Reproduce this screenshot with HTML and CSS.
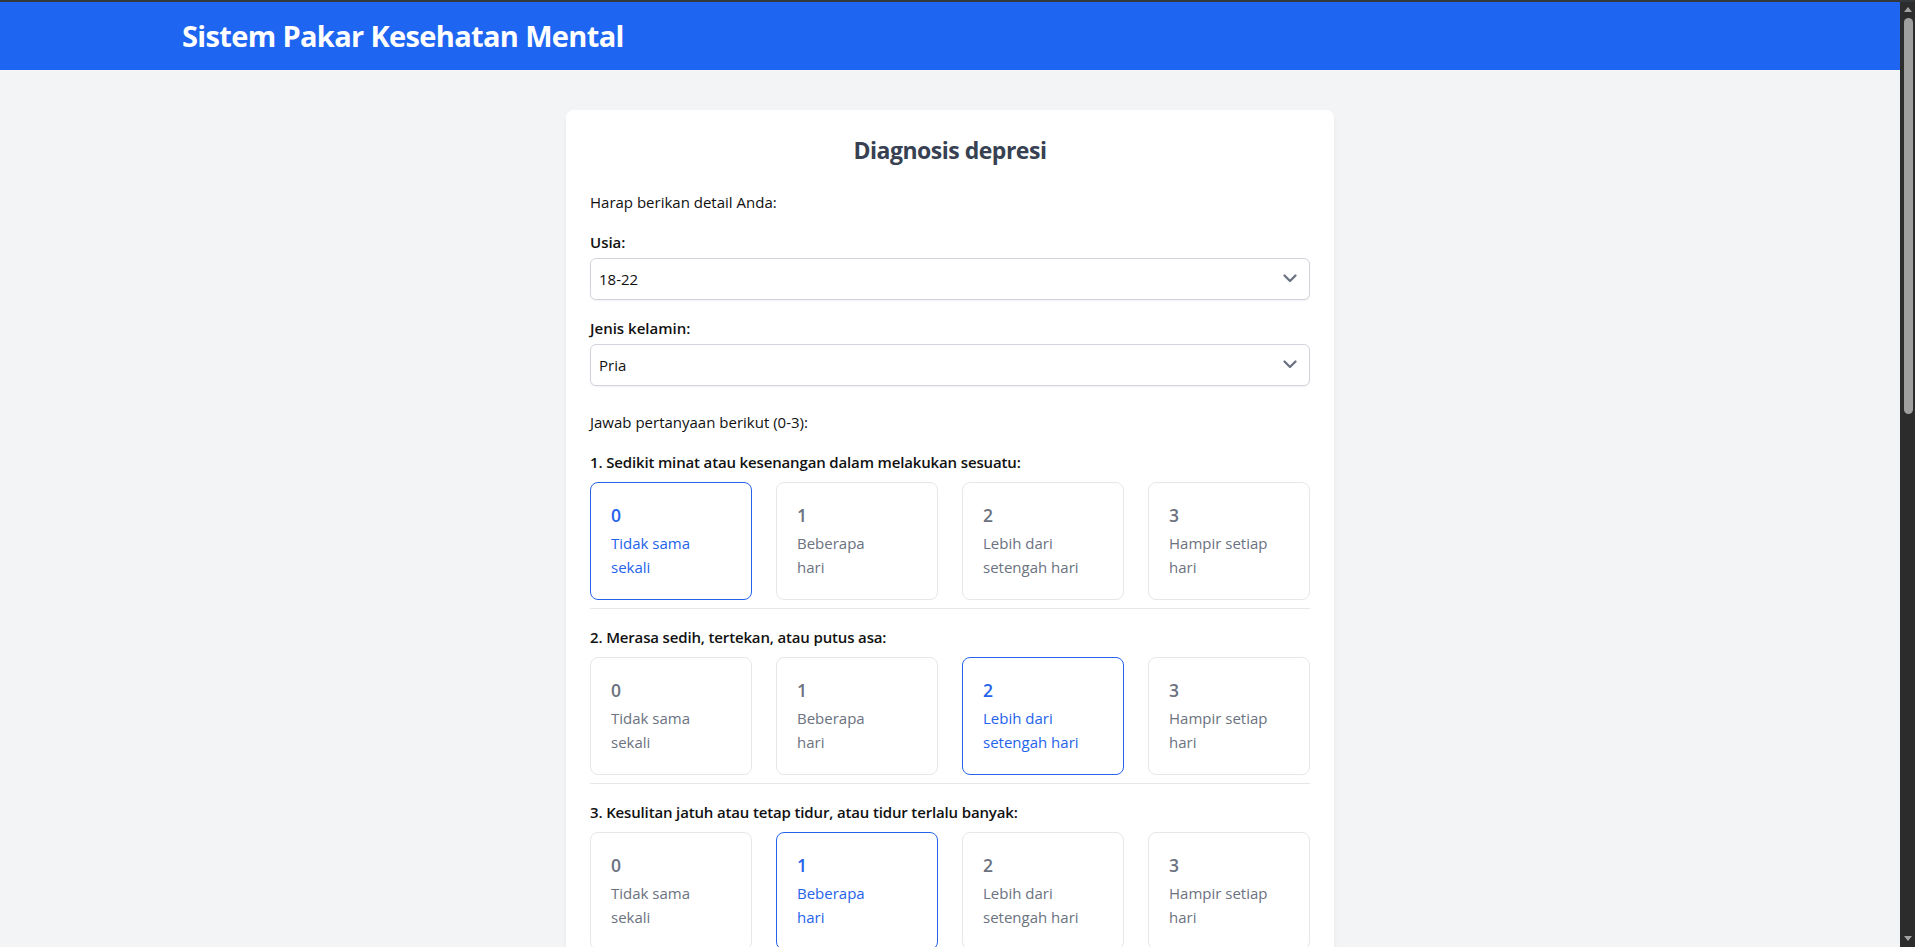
FILE: index.html
```html
<!DOCTYPE html>
<html lang="id">
<head>
<meta charset="utf-8">
<title>Sistem Pakar Kesehatan Mental</title>
<link rel="stylesheet" href="styles.css">
</head>
<body>
<div class="topline"></div>
<div class="frame">
  <div class="viewport">
    <header class="nav">
      <div class="container">
        <h1 class="brand">Sistem Pakar Kesehatan Mental</h1>
      </div>
    </header>
    <main class="page">
      <section class="card">
        <h2 class="card-title">Diagnosis depresi</h2>
        <p class="intro">Harap berikan detail Anda:</p>

        <div class="field">
          <label class="field-label" for="usia">Usia:</label>
          <div class="select-wrap">
            <select id="usia" class="select">
              <option selected>18-22</option>
              <option>23-27</option>
              <option>28-32</option>
              <option>33-37</option>
            </select>
            <svg class="chev" viewBox="0 0 24 24" aria-hidden="true"><path d="M6.5 9.5l5.5 5.5 5.5-5.5" fill="none" stroke="#6b7280" stroke-width="2.3" stroke-linecap="round" stroke-linejoin="round"/></svg>
          </div>
        </div>

        <div class="field field-last">
          <label class="field-label" for="jk">Jenis kelamin:</label>
          <div class="select-wrap">
            <select id="jk" class="select">
              <option selected>Pria</option>
              <option>Wanita</option>
            </select>
            <svg class="chev" viewBox="0 0 24 24" aria-hidden="true"><path d="M6.5 9.5l5.5 5.5 5.5-5.5" fill="none" stroke="#6b7280" stroke-width="2.3" stroke-linecap="round" stroke-linejoin="round"/></svg>
          </div>
        </div>

        <p class="intro">Jawab pertanyaan berikut (0-3):</p>

        <div class="question">
          <p class="q-label">1. Sedikit minat atau kesenangan dalam melakukan sesuatu:</p>
          <div class="options">
            <label class="option is-selected"><input class="radio" type="radio" name="q1" checked><span class="opt-num">0</span><span class="opt-text">Tidak sama<br>sekali</span></label>
            <label class="option"><input class="radio" type="radio" name="q1"><span class="opt-num">1</span><span class="opt-text">Beberapa<br>hari</span></label>
            <label class="option"><input class="radio" type="radio" name="q1"><span class="opt-num">2</span><span class="opt-text">Lebih dari<br>setengah hari</span></label>
            <label class="option"><input class="radio" type="radio" name="q1"><span class="opt-num">3</span><span class="opt-text">Hampir setiap<br>hari</span></label>
          </div>
        </div>

        <div class="question">
          <p class="q-label">2. Merasa sedih, tertekan, atau putus asa:</p>
          <div class="options">
            <label class="option"><input class="radio" type="radio" name="q2"><span class="opt-num">0</span><span class="opt-text">Tidak sama<br>sekali</span></label>
            <label class="option"><input class="radio" type="radio" name="q2"><span class="opt-num">1</span><span class="opt-text">Beberapa<br>hari</span></label>
            <label class="option is-selected"><input class="radio" type="radio" name="q2" checked><span class="opt-num">2</span><span class="opt-text">Lebih dari<br>setengah hari</span></label>
            <label class="option"><input class="radio" type="radio" name="q2"><span class="opt-num">3</span><span class="opt-text">Hampir setiap<br>hari</span></label>
          </div>
        </div>

        <div class="question">
          <p class="q-label">3. Kesulitan jatuh atau tetap tidur, atau tidur terlalu banyak:</p>
          <div class="options">
            <label class="option"><input class="radio" type="radio" name="q3"><span class="opt-num">0</span><span class="opt-text">Tidak sama<br>sekali</span></label>
            <label class="option is-selected"><input class="radio" type="radio" name="q3" checked><span class="opt-num">1</span><span class="opt-text">Beberapa<br>hari</span></label>
            <label class="option"><input class="radio" type="radio" name="q3"><span class="opt-num">2</span><span class="opt-text">Lebih dari<br>setengah hari</span></label>
            <label class="option"><input class="radio" type="radio" name="q3"><span class="opt-num">3</span><span class="opt-text">Hampir setiap<br>hari</span></label>
          </div>
        </div>

        <div class="question">
          <p class="q-label">4. Merasa lelah atau kurang bertenaga:</p>
          <div class="options">
            <label class="option is-selected"><input class="radio" type="radio" name="q4" checked><span class="opt-num">0</span><span class="opt-text">Tidak sama<br>sekali</span></label>
            <label class="option"><input class="radio" type="radio" name="q4"><span class="opt-num">1</span><span class="opt-text">Beberapa<br>hari</span></label>
            <label class="option"><input class="radio" type="radio" name="q4"><span class="opt-num">2</span><span class="opt-text">Lebih dari<br>setengah hari</span></label>
            <label class="option"><input class="radio" type="radio" name="q4"><span class="opt-num">3</span><span class="opt-text">Hampir setiap<br>hari</span></label>
          </div>
        </div>

        <div class="question">
          <p class="q-label">5. Nafsu makan buruk atau makan berlebihan:</p>
          <div class="options">
            <label class="option is-selected"><input class="radio" type="radio" name="q5" checked><span class="opt-num">0</span><span class="opt-text">Tidak sama<br>sekali</span></label>
            <label class="option"><input class="radio" type="radio" name="q5"><span class="opt-num">1</span><span class="opt-text">Beberapa<br>hari</span></label>
            <label class="option"><input class="radio" type="radio" name="q5"><span class="opt-num">2</span><span class="opt-text">Lebih dari<br>setengah hari</span></label>
            <label class="option"><input class="radio" type="radio" name="q5"><span class="opt-num">3</span><span class="opt-text">Hampir setiap<br>hari</span></label>
          </div>
        </div>

        <div class="question">
          <p class="q-label">6. Merasa buruk tentang diri sendiri, merasa gagal, atau mengecewakan keluarga:</p>
          <div class="options">
            <label class="option is-selected"><input class="radio" type="radio" name="q6" checked><span class="opt-num">0</span><span class="opt-text">Tidak sama<br>sekali</span></label>
            <label class="option"><input class="radio" type="radio" name="q6"><span class="opt-num">1</span><span class="opt-text">Beberapa<br>hari</span></label>
            <label class="option"><input class="radio" type="radio" name="q6"><span class="opt-num">2</span><span class="opt-text">Lebih dari<br>setengah hari</span></label>
            <label class="option"><input class="radio" type="radio" name="q6"><span class="opt-num">3</span><span class="opt-text">Hampir setiap<br>hari</span></label>
          </div>
        </div>

        <div class="question">
          <p class="q-label">7. Kesulitan berkonsentrasi pada sesuatu, seperti membaca atau menonton televisi:</p>
          <div class="options">
            <label class="option is-selected"><input class="radio" type="radio" name="q7" checked><span class="opt-num">0</span><span class="opt-text">Tidak sama<br>sekali</span></label>
            <label class="option"><input class="radio" type="radio" name="q7"><span class="opt-num">1</span><span class="opt-text">Beberapa<br>hari</span></label>
            <label class="option"><input class="radio" type="radio" name="q7"><span class="opt-num">2</span><span class="opt-text">Lebih dari<br>setengah hari</span></label>
            <label class="option"><input class="radio" type="radio" name="q7"><span class="opt-num">3</span><span class="opt-text">Hampir setiap<br>hari</span></label>
          </div>
        </div>

        <div class="question">
          <p class="q-label">8. Bergerak atau berbicara sangat lambat, atau sebaliknya sangat gelisah:</p>
          <div class="options">
            <label class="option is-selected"><input class="radio" type="radio" name="q8" checked><span class="opt-num">0</span><span class="opt-text">Tidak sama<br>sekali</span></label>
            <label class="option"><input class="radio" type="radio" name="q8"><span class="opt-num">1</span><span class="opt-text">Beberapa<br>hari</span></label>
            <label class="option"><input class="radio" type="radio" name="q8"><span class="opt-num">2</span><span class="opt-text">Lebih dari<br>setengah hari</span></label>
            <label class="option"><input class="radio" type="radio" name="q8"><span class="opt-num">3</span><span class="opt-text">Hampir setiap<br>hari</span></label>
          </div>
        </div>

        <div class="question">
          <p class="q-label">9. Pikiran bahwa lebih baik mati atau ingin menyakiti diri sendiri:</p>
          <div class="options">
            <label class="option is-selected"><input class="radio" type="radio" name="q9" checked><span class="opt-num">0</span><span class="opt-text">Tidak sama<br>sekali</span></label>
            <label class="option"><input class="radio" type="radio" name="q9"><span class="opt-num">1</span><span class="opt-text">Beberapa<br>hari</span></label>
            <label class="option"><input class="radio" type="radio" name="q9"><span class="opt-num">2</span><span class="opt-text">Lebih dari<br>setengah hari</span></label>
            <label class="option"><input class="radio" type="radio" name="q9"><span class="opt-num">3</span><span class="opt-text">Hampir setiap<br>hari</span></label>
          </div>
        </div>

        <button class="submit" type="button">Diagnosis</button>
      </section>
    </main>
  </div>
  <div class="fake-scroll" aria-hidden="true">
    <span class="arrow arrow-up"></span>
    <span class="thumb"></span>
    <span class="track-rest"></span>
    <span class="arrow arrow-down"></span>
  </div>
</div>
</body>
</html>
```

FILE: styles.css
```css
* { box-sizing: border-box; }

html, body { height: 100%; }

body {
  margin: 0;
  overflow: hidden;
  display: flex;
  flex-direction: column;
  background: #f3f4f6;
  font-family: "Open Sans", "Noto Sans", "DejaVu Sans", sans-serif;
  font-size: 15px;
  line-height: 24px;
  color: #111111;
}

.topline { flex: 0 0 2px; background: #35383a; }

.frame {
  flex: 1;
  min-height: 0;
  display: flex;
}

.viewport {
  flex: 1;
  min-width: 0;
  overflow: hidden;
}

/* imitation of the dark browser scrollbar */
.fake-scroll {
  flex: 0 0 15px;
  display: flex;
  flex-direction: column;
  align-items: center;
  background: #2c2c2c;
  padding: 5px 0 6px 1px;
}

.arrow {
  width: 0;
  height: 0;
  border-left: 4.5px solid transparent;
  border-right: 4.5px solid transparent;
}
.arrow-up { border-bottom: 5px solid #a3a3a3; }
.arrow-down { border-top: 5px solid #a3a3a3; }

.thumb {
  width: 9px;
  height: 396px;
  margin-top: 6px;
  border-radius: 5px;
  background: #9f9f9f;
}

.track-rest { flex: 1; }

.nav { background: #1e65f1; padding: 16px 0; }

.container { max-width: 1536px; margin: 0 auto; }

.brand {
  margin: 0;
  color: #ffffff;
  font-size: 29px;
  line-height: 36px;
  font-weight: 700;
  letter-spacing: -0.65px;
}

.page { padding: 40px 0; }

.card {
  max-width: 768px;
  margin: 0 auto;
  background: #ffffff;
  border-radius: 8px;
  padding: 24px;
  box-shadow: 0 4px 6px -1px rgba(0,0,0,0.06), 0 2px 4px -2px rgba(0,0,0,0.05);
}

.card-title {
  margin: 0 0 24px;
  text-align: center;
  font-size: 23px;
  line-height: 32px;
  font-weight: 700;
  letter-spacing: -0.5px;
  color: #374151;
}

.intro { margin: 0 0 16px; }

.field { margin-bottom: 16px; }
.field-last { margin-bottom: 24px; }

.field-label {
  display: block;
  font-weight: 600;
  margin-bottom: 4px;
}

.select-wrap { position: relative; }

.select {
  display: block;
  width: 100%;
  height: 42px;
  padding: 8px 40px 8px 8px;
  font: inherit;
  color: #111111;
  background: #ffffff;
  border: 1px solid #d1d5db;
  border-radius: 6px;
  box-shadow: 0 1px 2px rgba(0,0,0,0.06);
  appearance: none;
  -webkit-appearance: none;
}

.chev {
  position: absolute;
  right: 8px;
  top: 8px;
  width: 24px;
  height: 24px;
  pointer-events: none;
}

.question {
  padding-bottom: 8px;
  border-bottom: 1px solid #e5e7eb;
  margin-bottom: 16px;
}

.q-label {
  margin: 0 0 8px;
  font-weight: 600;
  letter-spacing: -0.15px;
}

.options {
  display: grid;
  grid-template-columns: repeat(4, 1fr);
  gap: 24px;
}

.option {
  display: flex;
  flex-direction: column;
  padding: 20px;
  border: 1px solid #e5e7eb;
  border-radius: 8px;
  color: #6b7280;
  cursor: pointer;
}

.option.is-selected {
  border-color: #2563eb;
  color: #2563eb;
}

.radio { display: none; }

.opt-num {
  font-size: 17.5px;
  line-height: 24px;
  font-weight: 600;
  margin-bottom: 4px;
}

.opt-text { font-size: 15px; line-height: 24px; }

.submit {
  display: block;
  width: 100%;
  margin-top: 8px;
  padding: 10px 16px;
  font: inherit;
  font-weight: 600;
  color: #ffffff;
  background: #2563eb;
  border: 0;
  border-radius: 6px;
}
```
